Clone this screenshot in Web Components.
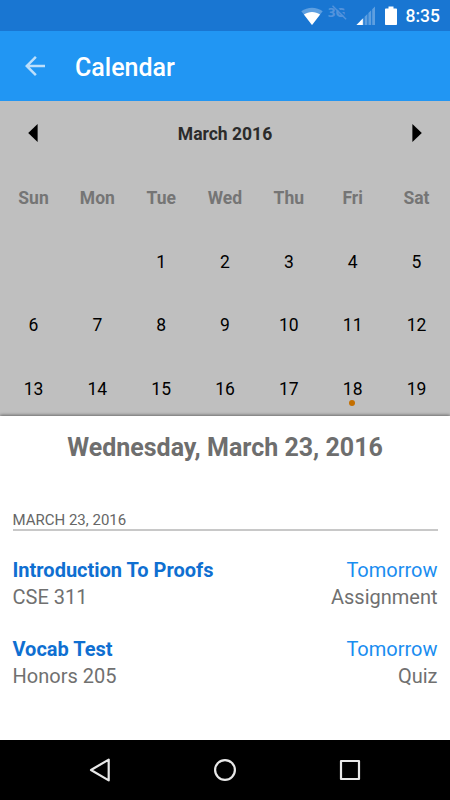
<!DOCTYPE html>
<html lang="en">
<head>
<meta charset="utf-8">
<meta name="viewport" content="width=device-width, initial-scale=1">
<title>Calendar</title>
<style>
  html, body {
    margin: 0;
    height: 100%;
  }

  body {
    font-family: Roboto, "Liberation Sans", sans-serif;
    background: #fff;
    overflow: hidden;
  }
</style>
</head>
<body>
<calendar-app></calendar-app>

<script>
class StatusBar extends HTMLElement {
  constructor() {
    super();
    this.attachShadow({ mode: "open" });
    this.shadowRoot.innerHTML = `
      <style>
        :host {
          display: flex;
          justify-content: flex-end;
          align-items: center;
          height: 31px;
          padding-right: 10px;
          box-sizing: border-box;
          background: #1976d2;
          color: #fff;
        }

        svg {
          display: block;
          flex: none;
        }

        .network {
          position: relative;
          width: 20px;
          height: 20px;
          margin: -5px 8px 0 5px;
          color: #5293dc;
          font-family: "DejaVu Sans", sans-serif;
          font-size: 12px;
          line-height: 21px;
          font-weight: 700;
          letter-spacing: -0.3px;
        }

        .network svg {
          position: absolute;
          left: 0;
          top: 0;
        }

        .battery {
          margin-left: 9px;
        }

        .clock {
          margin-left: 9px;
          font-size: 17.5px;
          font-weight: 500;
          line-height: 31px;
          padding-top: 2px;
        }
      </style>
      <svg width="22" height="20" viewBox="0 0 22 20">
        <path d="M0.3 5.3C6.5 0.6 15.5 0.6 21.7 5.3L11 19Z" fill="#5e9fe0"/>
        <path d="M2.9 8.6C7.5 5 14.5 5 19.1 8.6L11 19Z" fill="#fff"/>
      </svg>
      <span class="network">3G
        <svg width="20" height="20" viewBox="0 0 20 20">
          <path d="M5.6 1.6L19.2 15.2" stroke="#1976d2" stroke-width="1.6"/>
          <path d="M4.5 2.7L18.1 16.3" stroke="#5293dc" stroke-width="1.4"/>
        </svg>
      </span>
      <svg width="20" height="20" viewBox="0 0 20 20">
        <path d="M4.2 15.2V19H7.6V11.8ZM8.6 10.8V19H11.4V8ZM12.4 7V19H15.2V4.2ZM16.2 3.2V19H19V0.5Z" fill="#5e9fe0"/>
        <path d="M0.4 19L6.8 12.4V19Z" fill="#fff"/>
      </svg>
      <svg class="battery" width="12" height="20" viewBox="0 0 12 20">
        <path d="M3.5 0.5H8.5V2.5H11.2Q12 2.5 12 3.3V18.2Q12 19 11.2 19H0.8Q0 19 0 18.2V3.3Q0 2.5 0.8 2.5H3.5Z" fill="#fff"/>
      </svg>
      <span class="clock"><slot></slot></span>
    `;
  }
}

class AppToolbar extends HTMLElement {
  constructor() {
    super();
    this.attachShadow({ mode: "open" });
    this.shadowRoot.innerHTML = `
      <style>
        :host {
          display: flex;
          align-items: center;
          height: 70px;
          padding-left: 20px;
          box-sizing: border-box;
          background: #2196f3;
          color: #fff;
        }

        svg {
          display: block;
          margin-right: 25px;
        }

        .title {
          font-size: 25px;
          font-weight: 500;
          line-height: 30px;
          padding-top: 4px;
        }
      </style>
      <svg width="30" height="30" viewBox="0 0 24 24">
        <path d="M20 11H7.83l5.59-5.59L12 4l-8 8 8 8 1.41-1.41L7.83 13H20v-2z" fill="#bcdffb"/>
      </svg>
      <span class="title"><slot></slot></span>
    `;
  }
}

class DayCell extends HTMLElement {
  constructor() {
    super();
    this.attachShadow({ mode: "open" });
    this.shadowRoot.innerHTML = `
      <style>
        :host {
          display: flex;
          align-items: center;
          justify-content: center;
          position: relative;
          font-size: 17.5px;
          color: #000;
        }

        :host([heading]) {
          font-weight: 700;
          color: #757575;
        }

        /* event marker below the number */
        :host([marked])::after {
          content: "";
          position: absolute;
          left: 50%;
          top: 43px;
          width: 6px;
          height: 6px;
          margin-left: -3.5px;
          border-radius: 50%;
          background: #c46f00;
        }
      </style>
      <slot></slot>
    `;
  }
}

class MonthView extends HTMLElement {
  connectedCallback() {
    if (!this.shadowRoot) this.attachShadow({ mode: "open" });
    this.#render();
  }

  #render() {
    const offset = Number(this.getAttribute("offset") ?? 0);
    const marked = Number(this.getAttribute("marked"));
    const last = Number(this.getAttribute("last") ?? 31);

    const names = ["Sun", "Mon", "Tue", "Wed", "Thu", "Fri", "Sat"]
      .map((name) => `<day-cell heading>${name}</day-cell>`)
      .join("");
    const blanks = "<day-cell></day-cell>".repeat(offset);
    let days = "";
    for (let day = 1; day <= last; day++) {
      days += `<day-cell${day === marked ? " marked" : ""}>${day}</day-cell>`;
    }

    this.shadowRoot.innerHTML = `
      <style>
        :host {
          display: block;
          height: 315px;
          overflow: hidden;
          background: #bfbfbf;
        }

        .header {
          display: flex;
          align-items: center;
          justify-content: space-between;
          height: 65px;
          padding: 0 28px;
        }

        .header svg {
          margin-bottom: 1px;
        }

        .month {
          font-size: 17.5px;
          font-weight: 700;
          color: #2b2b2b;
        }

        .grid {
          display: grid;
          grid-template-columns: repeat(7, 1fr);
          grid-auto-rows: 63.8px;
          padding: 0 1.6px;
        }
      </style>
      <div class="header">
        <svg width="10" height="18" viewBox="0 0 10 18"><path d="M9.6 0V18L0.2 9Z"/></svg>
        <span class="month"><slot></slot></span>
        <svg width="10" height="18" viewBox="0 0 10 18"><path d="M0.4 0V18L9.8 9Z"/></svg>
      </div>
      <div class="grid">${names}${blanks}${days}</div>
    `;
  }
}

class DaySheet extends HTMLElement {
  constructor() {
    super();
    this.attachShadow({ mode: "open" });
    this.shadowRoot.innerHTML = `
      <style>
        :host {
          display: block;
          position: relative;
          flex: 1;
          box-sizing: border-box;
          padding: 16px 12.5px 0;
          background: #fff;
          box-shadow: 0 -1px 3px rgba(0, 0, 0, 0.45);
        }

        .heading {
          font-size: 25px;
          font-weight: 700;
          line-height: 32px;
          text-align: center;
          color: #6e6e6e;
        }

        .section {
          margin: 48px 0 26px;
          border-bottom: 2px solid #c8c8c8;
          font-size: 15px;
          line-height: 17px;
          color: #666;
        }
      </style>
      <div class="heading"><slot name="heading"></slot></div>
      <div class="section"><slot name="section"></slot></div>
      <slot></slot>
    `;
  }
}

class AgendaItem extends HTMLElement {
  constructor() {
    super();
    this.attachShadow({ mode: "open" });
    this.shadowRoot.innerHTML = `
      <style>
        :host {
          display: block;
          margin-bottom: 25px;
          font-size: 20px;
          line-height: 27px;
          color: #707070;
        }

        .row {
          display: flex;
          justify-content: space-between;
        }

        .name {
          font-weight: 700;
          color: #0f6fd1;
        }

        .due {
          color: #1a8df0;
        }
      </style>
      <div class="row">
        <span class="name"><slot name="name"></slot></span>
        <span class="due"><slot name="due"></slot></span>
      </div>
      <div class="row">
        <span><slot name="course"></slot></span>
        <span><slot name="kind"></slot></span>
      </div>
    `;
  }
}

class NavBar extends HTMLElement {
  constructor() {
    super();
    this.attachShadow({ mode: "open" });
    this.shadowRoot.innerHTML = `
      <style>
        :host {
          display: flex;
          align-items: center;
          justify-content: center;
          gap: 95px;
          height: 60px;
          position: relative;
          background: #000;
        }

        svg {
          display: block;
          fill: none;
          stroke: #e8e8e8;
          stroke-width: 2.2;
          stroke-linejoin: round;
        }
      </style>
      <svg width="30" height="30" viewBox="0 0 30 30"><path d="M23.7 4.6V25.4L6 15Z"/></svg>
      <svg width="30" height="30" viewBox="0 0 30 30"><circle cx="15" cy="15" r="9.9"/></svg>
      <svg width="30" height="30" viewBox="0 0 30 30"><rect x="6" y="6" width="18" height="18"/></svg>
    `;
  }
}

class CalendarApp extends HTMLElement {
  constructor() {
    super();
    this.attachShadow({ mode: "open" });
    this.shadowRoot.innerHTML = `
      <style>
        :host {
          display: flex;
          flex-direction: column;
          height: 100vh;
          overflow: hidden;
        }
      </style>
      <status-bar>8:35</status-bar>
      <app-toolbar>Calendar</app-toolbar>
      <month-view offset="2" last="19" marked="18">March 2016</month-view>
      <day-sheet>
        <span slot="heading">Wednesday, March 23, 2016</span>
        <span slot="section">MARCH 23, 2016</span>
        <agenda-item>
          <span slot="name">Introduction To Proofs</span>
          <span slot="due">Tomorrow</span>
          <span slot="course">CSE 311</span>
          <span slot="kind">Assignment</span>
        </agenda-item>
        <agenda-item>
          <span slot="name">Vocab Test</span>
          <span slot="due">Tomorrow</span>
          <span slot="course">Honors 205</span>
          <span slot="kind">Quiz</span>
        </agenda-item>
      </day-sheet>
      <nav-bar></nav-bar>
    `;
  }
}

customElements.define("status-bar", StatusBar);
customElements.define("app-toolbar", AppToolbar);
customElements.define("day-cell", DayCell);
customElements.define("month-view", MonthView);
customElements.define("agenda-item", AgendaItem);
customElements.define("day-sheet", DaySheet);
customElements.define("nav-bar", NavBar);
customElements.define("calendar-app", CalendarApp);
</script>
</body>
</html>
